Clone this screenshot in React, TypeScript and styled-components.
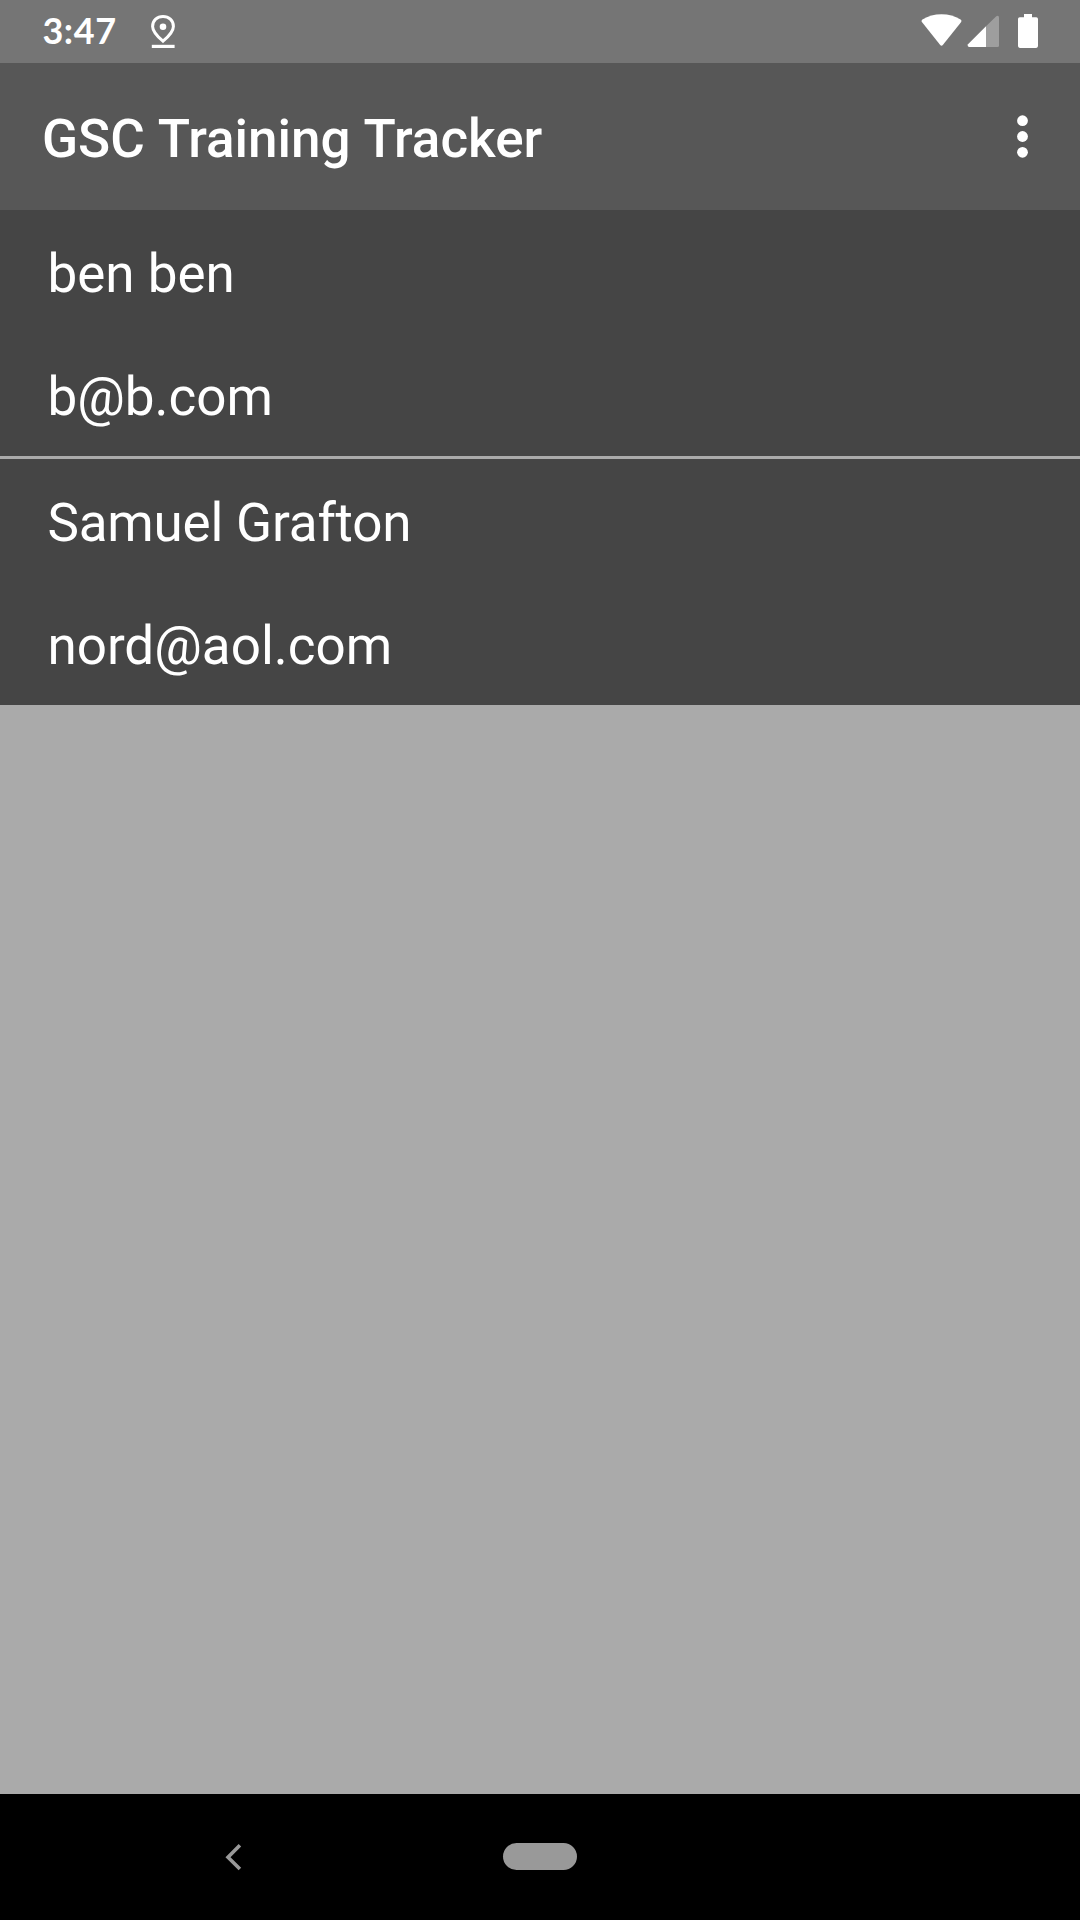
import React from 'react';
import styled, { createGlobalStyle } from 'styled-components';

const GlobalStyle = createGlobalStyle`
  * { box-sizing: border-box; }
  body { margin: 0; background: #aaaaaa; }
`;

const Screen = styled.div`
  display: flex;
  flex-direction: column;
  width: 1080px;
  height: 1920px;
  overflow: hidden;
  background: #aaaaaa;
  color: #fff;
  font-family: Roboto, 'Liberation Sans', sans-serif;
`;

const StatusBar = styled.header`
  display: flex;
  align-items: flex-start;
  height: 63px;
  padding: 0 40px 0 42.4px;
  background: #757575;
`;

const Clock = styled.time`
  width: 107.6px;
  font: 700 36px/61px Lato, 'Open Sans', sans-serif;
  letter-spacing: 0.6px;
`;

const StatusIcons = styled.div`
  display: flex;
  margin-left: auto;
`;

const Icon = styled.svg`
  display: block;
  flex: none;
`;

const AppBar = styled.div`
  display: flex;
  align-items: center;
  justify-content: space-between;
  height: 147px;
  padding: 0 42px;
  background: #575757;
`;

const Title = styled.h1`
  margin: 0;
  padding-top: 4px;
  font-size: 53px;
  font-weight: 500;
  line-height: 62px;
  word-spacing: 1px;
  white-space: nowrap;
`;

const MenuButton = styled.button`
  display: flex;
  padding: 0;
  border: 0;
  background: none;
  color: inherit;
`;

const List = styled.ul`
  display: flex;
  flex-direction: column;
  flex: 1;
  gap: 3px;
  margin: 0;
  padding: 0;
  list-style: none;
`;

const Row = styled.li`
  display: flex;
  flex-direction: column;
  background: #454545;
`;

const Line = styled.span<{ $tracking?: number }>`
  height: 123px;
  padding: 5px 47.4px 0;
  font-size: 53px;
  line-height: 118px;
  letter-spacing: ${(p) => p.$tracking ?? 0}px;
  white-space: nowrap;
`;

const NavBar = styled.nav`
  display: grid;
  grid-template-columns: 1fr 74px 1fr;
  align-items: center;
  height: 126px;
  padding-bottom: 1px;
  background: #000;
`;

const BackButton = styled(MenuButton)`
  padding-left: 224px;
`;

const HomePill = styled.div`
  height: 27px;
  border-radius: 14px;
  background: #999;
`;

const people = [
  { name: 'ben ben', email: 'b@b.com', tracking: 0 },
  { name: 'Samuel Grafton', email: 'nord@aol.com', tracking: -0.2 },
];

export default function App() {
  return (
    <>
      <GlobalStyle />
      <Screen>
        <StatusBar>
          <Clock>3:47</Clock>
          <Icon width="26" height="63" viewBox="150 0 26 63" fill="none">
            <path
              d="M163 41.2C155.8 35 152.6 30.2 152.6 26.4C152.6 20.4 157.2 16.4 163 16.4S173.4 20.4 173.4 26.4C173.4 30.2 170.2 35 163 41.2Z"
              stroke="#fff"
              strokeWidth="3"
            />
            <circle cx="163" cy="26.8" r="3.3" fill="#fff" />
            <path d="M151.8 44.8h22.8v3.2h-22.8z" fill="#fff" />
          </Icon>
          <StatusIcons>
            <Icon width="119" height="63" viewBox="921 0 119 63" fill="#fff">
              <path d="M921.7 21.8Q921.2 20.5 922.4 19.6Q931 14.2 941.5 14.2T960.6 19.6Q962 20.5 961.2 22L943 44.8Q941.5 46.6 940 44.8Z" />
              <path d="M986 26.3V47H969Q967 46.5 968 44.3Z" />
              <path d="M986 26.3L996.3 16.2Q999 15 999 17.8V45.5Q999 47 997.5 47H986Z" fillOpacity=".3" />
              <path d="M1024 14h8v3.3h4.2q1.8 0 1.8 1.8v27q0 1.8-1.8 1.8h-16.4q-1.8 0-1.8-1.8v-27q0-1.8 1.8-1.8h4.2Z" />
            </Icon>
          </StatusIcons>
        </StatusBar>
        <AppBar>
          <Title>GSC Training Tracker</Title>
          <MenuButton aria-label="More options">
            <Icon width="21" height="147" viewBox="1017 63 21 147" fill="#fff">
              <circle cx="1022.5" cy="120.7" r="5.4" />
              <circle cx="1022.5" cy="136.5" r="5.4" />
              <circle cx="1022.5" cy="152.3" r="5.4" />
            </Icon>
          </MenuButton>
        </AppBar>
        <List>
          {people.map((person) => (
            <Row key={person.email}>
              <Line $tracking={person.tracking}>{person.name}</Line>
              <Line>{person.email}</Line>
            </Row>
          ))}
        </List>
        <NavBar>
          <BackButton aria-label="Back">
            <Icon width="20" height="30" viewBox="224 1842 20 30" fill="none">
              <path d="M239.9 1845.3L228 1857.2L239.9 1869.1" stroke="#999" strokeWidth="3.6" />
            </Icon>
          </BackButton>
          <HomePill />
        </NavBar>
      </Screen>
    </>
  );
}
